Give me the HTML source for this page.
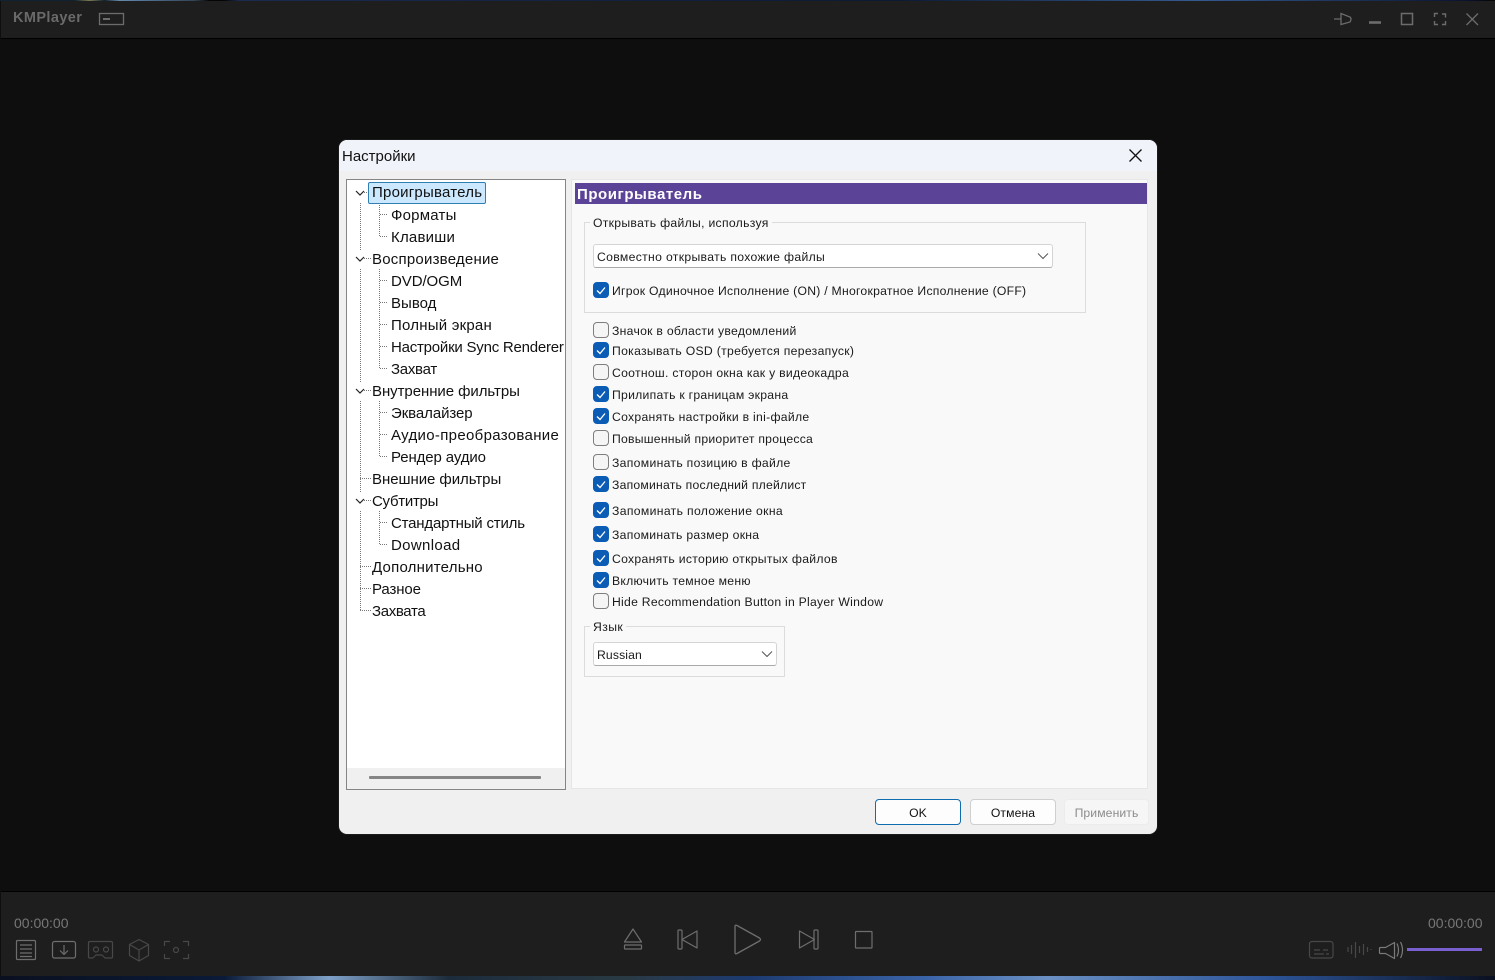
<!DOCTYPE html>
<html><head><meta charset="utf-8"><style>
*{box-sizing:border-box;margin:0;padding:0}
html,body{width:1495px;height:980px;overflow:hidden;background:#0e0e0e;font-family:"Liberation Sans",sans-serif}
.a{position:absolute}
.t{position:absolute;white-space:nowrap;line-height:20px;height:20px}
.tree{font-size:15px;color:#111;letter-spacing:.22px}
.r{font-size:12.2px;color:#1a1a1a;left:612px;letter-spacing:.29px}
.cb{position:absolute;left:593px;width:16px;height:16px;border-radius:4px;background:#f5f5f5;border:1px solid #7e7e7e}
.cb.on{background:#0a5cb4;border-color:#0a5cb4}
.cb.on svg{position:absolute;left:2px;top:3px}
.group{position:absolute;border:1px solid #dcdcdc}
.combo{position:absolute;background:#fff;border:1px solid #d4d4d4;border-bottom-color:#aaa;border-radius:3px}
.btn{position:absolute;top:799px;height:26px;border-radius:4px;background:#fdfdfd;border:1px solid #cfcfcf;font-size:12.2px;letter-spacing:.1px;color:#111;text-align:center;line-height:26px}
</style></head><body>
<div class="a" style="left:0;top:0;width:1495px;height:1px;background:linear-gradient(90deg,#123 0,#123 5%,#7a7a50 6%,#123 7%,#678aa8 8%,#5a7ca0 9%,#345 13%,#050505 14%,#050505 15%,#1a2a50 16%,#0c1a34 60%,#345a90 80%,#0a1430 98%,#050505 100%)"></div>
<div class="a" style="left:0;top:976px;width:1495px;height:4px;background:linear-gradient(90deg,#0a1020 0,#0a1a38 15%,#7ea0c8 22%,#1c2c3c 30%,#2a3a44 42%,#1c3a70 50%,#3a64a8 62%,#6a90c4 70%,#2c5498 85%,#0a1020 100%)"></div>
<div class="a" style="left:1px;top:1px;width:1494px;height:37px;background:#1e1e1e"></div>
<div class="a" style="left:1px;top:38px;width:1494px;height:1px;background:#000"></div>
<div class="a" style="left:1px;top:891px;width:1494px;height:85px;background:#1e1e1e;border-top:1px solid #000"></div>
<div class="t" style="left:13px;top:8px;font-size:14.5px;font-weight:bold;color:#6a6a6a;letter-spacing:.4px">KMPlayer</div>

<svg class="a" style="left:0;top:0" width="1495" height="40" fill="none" stroke="#6c6c6c" stroke-width="1.3">
<rect x="99.5" y="13.5" width="24" height="11"/><path d="M103 19h7" stroke-width="2"/>
<path d="M1334 19h7M1341 13.5l9 3.5q2 2 0 5l-9 2.5z"/>
<path d="M1369 22.5h12" stroke-width="2.6"/>
<rect x="1401.5" y="13.5" width="11" height="11" stroke-width="1.5"/>
<path d="M1434.5 17v-3.500h3.500M1442 14h3.500v3.500M1445.500 21v3.500h-3.500M1438 24.500h-3.500v-3.500" stroke-width="1.4"/>
<path d="M1466.500 13.500l11.500 11.500M1478 13.500l-11.500 11.500" stroke-width="1.3"/>
</svg>

<div class="t" style="left:14px;top:913px;font-size:14px;color:#777">00:00:00</div>
<div class="t" style="left:1428px;top:913px;font-size:14px;color:#777">00:00:00</div>

<svg class="a" style="left:0;top:920px" width="1495" height="60" fill="none" stroke="#6e6e6e" stroke-width="1.2" stroke-linejoin="round">
<g transform="translate(0,-920)">
<rect x="16.500" y="940.500" width="19" height="19" rx="1"/><path d="M20 945h12M20 949h12M20 953h12M20 956.500h12" stroke-width="1.3"/>
<rect x="52.500" y="941.500" width="23" height="16.500" rx="2"/><path d="M64 945v9M60 950.500l4 4 4-4"/>
<g stroke="#484848"><path d="M90 941.500h21q1.500 0 1.500 1.500v14q0 1-1.500 1h-6l-3-3h-6l-3 3h-3q-1.500 0-1.500-1v-14q0-1.500 1.500-1.500z"/><circle cx="96" cy="949.500" r="2.500"/><circle cx="106" cy="949.500" r="2.500"/>
<path d="M139 939.500l9.500 5v11l-9.500 5.500-9.500-5.500v-11zM129.500 944.500l9.500 5.500 9.500-5.500M139 950v11"/>
<path d="M164.500 946v-4.500h5.500M183 941.500h5.500v4.500M188.500 954v4.500h-5.500M170 958.500h-5.500v-4.500"/><circle cx="176" cy="950" r="2.500"/>
<rect x="1309.500" y="941.500" width="23.500" height="16.500" rx="2.500"/><path d="M1314 950h6M1323 950h5M1314 954h10M1326 954h3"/>
<path d="M1348 947v5M1351.500 945v9M1355.500 942v16M1359.500 946v7M1363.500 944v11M1367.500 947v5M1371 949v1"/></g>
<path d="M624.500 942l8.500-13 8.500 13z"/><rect x="624.500" y="945" width="17" height="4" rx=".5"/>
<rect x="678" y="930" width="4" height="19" rx="1"/><path d="M697 931v17l-15-8.500z"/>
<path d="M735 926.500q0-2 2-1l22.500 12.500q2 1.500 0 3l-22.500 12.500q-2 1-2-1z" stroke-width="1.300"/>
<path d="M799.500 931v17l15-8.500z"/><rect x="814" y="930" width="4" height="19" rx="1"/>
<rect x="855.500" y="931.500" width="16.500" height="16.500" rx=".5"/>
<path d="M1380.500 947.500h5l9-5v16l-9-5h-5q-1 0-1-1v-4q0-1 1-1zM1397 943.500q3 6.500 0 13M1400.500 942q4 8 0 16" stroke="#7a7a7a"/>
</g></svg>
<div class="a" style="left:1407px;top:948px;width:75px;height:3px;background:#7a5fd0"></div>

<!-- dialog -->
<div class="a" style="left:339px;top:140px;width:818px;height:694px;background:#f0f0f0;border-radius:8px;overflow:hidden;box-shadow:0 0 0 1px #1a1a1a">
<div class="a" style="left:0;top:0;width:818px;height:31px;background:#f0f3f9"></div>
</div>
<div class="t" style="left:342px;top:147px;font-size:15px;color:#111;letter-spacing:0">Настройки</div>
<svg class="a" style="left:1128px;top:148px" width="15" height="15" stroke="#111" stroke-width="1.300" fill="none"><path d="M1.500 1.500l12 12M13.500 1.500l-12 12"/></svg>

<!-- tree -->
<div class="a" style="left:346px;top:179px;width:220px;height:611px;background:#fff;border:1px solid #858585"></div>
<div class="a" style="left:347px;top:768px;width:218px;height:21px;background:#f0f0f0"></div>
<div class="a" style="left:369px;top:776px;width:172px;height:3px;background:#858585;border-radius:1px"></div>
<div class="a" style="left:368px;top:182px;width:118px;height:22px;background:#cce8ff;border:1px solid #2f7fb5;border-radius:2px"></div>
<svg class="a" style="left:0;top:0" width="600" height="640" fill="none" stroke="#777" stroke-width="1" stroke-dasharray="1 1">
<path d="M360.500 203v47M360.500 269v113M360.500 401v92M360.500 511v100M364 192.500h4M364 258.500h8M364 390.500h8M364 500.500h8M360 478.500h12M360 566.500h12M360 588.500h12M360 610.500h12"/>
<path d="M379.500 203v33M379.500 269v99M379.500 401v55M379.500 511v33"/>
<path d="M380 214.500h8M380 236.500h8M380 280.500h8M380 302.500h8M380 324.500h8M380 346.500h8M380 368.500h8M380 412.500h8M380 434.500h8M380 456.500h8M380 522.500h8M380 544.500h8"/>
<g stroke="#222" stroke-dasharray="none" stroke-width="1.200"><path d="M356 191l4 4 4-4M356 257l4 4 4-4M356 389l4 4 4-4M356 499l4 4 4-4"/></g>
</svg>
<div class="t tree" style="left:372px;top:183px">Проигрыватель</div>
<div class="t tree" style="left:391px;top:206px">Форматы</div>
<div class="t tree" style="left:391px;top:228px">Клавиши</div>
<div class="t tree" style="left:372px;top:250px">Воспроизведение</div>
<div class="t tree" style="left:391px;top:272px;letter-spacing:-.07px">DVD/OGM</div>
<div class="t tree" style="left:391px;top:294px;letter-spacing:.02px">Вывод</div>
<div class="t tree" style="left:391px;top:316px">Полный экран</div>
<div class="t tree" style="left:391px;top:338px;letter-spacing:-.22px">Настройки Sync Renderer</div>
<div class="t tree" style="left:391px;top:360px;letter-spacing:-.28px">Захват</div>
<div class="t tree" style="left:372px;top:382px;letter-spacing:-.06px">Внутренние фильтры</div>
<div class="t tree" style="left:391px;top:404px;letter-spacing:-.08px">Эквалайзер</div>
<div class="t tree" style="left:391px;top:426px;letter-spacing:.32px">Аудио-преобразование</div>
<div class="t tree" style="left:391px;top:448px;letter-spacing:-.11px">Рендер аудио</div>
<div class="t tree" style="left:372px;top:470px;letter-spacing:-.05px">Внешние фильтры</div>
<div class="t tree" style="left:372px;top:492px;letter-spacing:-.28px">Субтитры</div>
<div class="t tree" style="left:391px;top:514px;letter-spacing:-.19px">Стандартный стиль</div>
<div class="t tree" style="left:391px;top:536px;letter-spacing:.34px">Download</div>
<div class="t tree" style="left:372px;top:558px">Дополнительно</div>
<div class="t tree" style="left:372px;top:580px;letter-spacing:-.11px">Разное</div>
<div class="t tree" style="left:372px;top:602px;letter-spacing:-.35px">Захвата</div>

<!-- panel -->
<div class="a" style="left:571px;top:179px;width:577px;height:610px;background:#f9f9f9;border:1px solid #e6e6e6"></div>
<div class="a" style="left:575px;top:183px;width:572px;height:21px;background:#5b4398"></div>
<div class="t" style="left:577px;top:185px;font-size:15px;font-weight:bold;color:#fff;letter-spacing:.55px">Проигрыватель</div>

<div class="group" style="left:584px;top:222px;width:502px;height:91px"></div>
<div class="t" style="left:590px;top:213px;font-size:12.2px;color:#1a1a1a;background:#f9f9f9;padding:0 3px;letter-spacing:.3px">Открывать файлы, используя</div>
<div class="combo" style="left:593px;top:244px;width:460px;height:24px"></div>
<div class="t" style="left:597px;top:247px;font-size:12.2px;color:#1a1a1a;letter-spacing:.33px">Совместно открывать похожие файлы</div>
<svg class="a" style="left:1037px;top:252px" width="12" height="8" fill="none" stroke="#555" stroke-width="1"><path d="M1 1.500l5 5 5-5"/></svg>

<div class="cb on" style="top:282px"><svg width="10" height="9" fill="none" stroke="#fff" stroke-width="1.300"><path d="M1 4.500l3 3 5-6"/></svg></div>
<div class="t r" style="top:281px;letter-spacing:.26px">Игрок Одиночное Исполнение (ON) / Многократное Исполнение (OFF)</div>
<div class="cb" style="top:322px"></div><div class="t r" style="top:321px;letter-spacing:.28px">Значок в области уведомлений</div>
<div class="cb on" style="top:342px"><svg width="10" height="9" fill="none" stroke="#fff" stroke-width="1.300"><path d="M1 4.500l3 3 5-6"/></svg></div><div class="t r" style="top:341px;letter-spacing:.31px">Показывать OSD (требуется перезапуск)</div>
<div class="cb" style="top:364px"></div><div class="t r" style="top:363px">Соотнош. сторон окна как у видеокадра</div>
<div class="cb on" style="top:386px"><svg width="10" height="9" fill="none" stroke="#fff" stroke-width="1.300"><path d="M1 4.500l3 3 5-6"/></svg></div><div class="t r" style="top:385px;letter-spacing:.27px">Прилипать к границам экрана</div>
<div class="cb on" style="top:408px"><svg width="10" height="9" fill="none" stroke="#fff" stroke-width="1.300"><path d="M1 4.500l3 3 5-6"/></svg></div><div class="t r" style="top:407px">Сохранять настройки в ini-файле</div>
<div class="cb" style="top:430px"></div><div class="t r" style="top:429px;letter-spacing:.25px">Повышенный приоритет процесса</div>
<div class="cb" style="top:454px"></div><div class="t r" style="top:453px;letter-spacing:.31px">Запоминать позицию в файле</div>
<div class="cb on" style="top:476px"><svg width="10" height="9" fill="none" stroke="#fff" stroke-width="1.300"><path d="M1 4.500l3 3 5-6"/></svg></div><div class="t r" style="top:475px;letter-spacing:.22px">Запоминать последний плейлист</div>
<div class="cb on" style="top:502px"><svg width="10" height="9" fill="none" stroke="#fff" stroke-width="1.300"><path d="M1 4.500l3 3 5-6"/></svg></div><div class="t r" style="top:501px;letter-spacing:.34px">Запоминать положение окна</div>
<div class="cb on" style="top:526px"><svg width="10" height="9" fill="none" stroke="#fff" stroke-width="1.300"><path d="M1 4.500l3 3 5-6"/></svg></div><div class="t r" style="top:525px;letter-spacing:.28px">Запоминать размер окна</div>
<div class="cb on" style="top:550px"><svg width="10" height="9" fill="none" stroke="#fff" stroke-width="1.300"><path d="M1 4.500l3 3 5-6"/></svg></div><div class="t r" style="top:549px;letter-spacing:.3px">Сохранять историю открытых файлов</div>
<div class="cb on" style="top:572px"><svg width="10" height="9" fill="none" stroke="#fff" stroke-width="1.300"><path d="M1 4.500l3 3 5-6"/></svg></div><div class="t r" style="top:571px;letter-spacing:.27px">Включить темное меню</div>
<div class="cb" style="top:593px"></div><div class="t r" style="top:592px;letter-spacing:.26px">Hide Recommendation Button in Player Window</div>

<div class="group" style="left:584px;top:626px;width:201px;height:51px"></div>
<div class="t" style="left:590px;top:617px;font-size:12.2px;color:#1a1a1a;background:#f9f9f9;padding:0 3px;letter-spacing:.42px">Язык</div>
<div class="combo" style="left:593px;top:642px;width:184px;height:24px"></div>
<div class="t" style="left:597px;top:645px;font-size:12.2px;color:#1a1a1a;letter-spacing:.13px">Russian</div>
<svg class="a" style="left:761px;top:650px" width="12" height="8" fill="none" stroke="#555" stroke-width="1"><path d="M1 1.500l5 5 5-5"/></svg>

<div class="btn" style="left:875px;width:86px;border:1.500px solid #0f6cb0">OK</div>
<div class="btn" style="left:970px;width:86px">Отмена</div>
<div class="btn" style="left:1064px;width:85px;background:#f6f6f6;border-color:#ececec;color:#8c8c8c">Применить</div>
</body></html>
